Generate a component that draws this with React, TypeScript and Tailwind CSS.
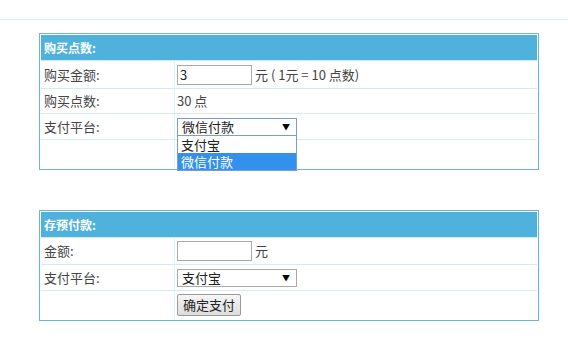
const font = { fontFamily: '"Noto Sans CJK SC", "Liberation Sans", sans-serif' };

function Select({ value, open }: { value: string; open?: boolean }) {
  return (
    <div className="relative">
      <div
        className={`flex h-[18px] w-[120px] items-center justify-between border bg-white pl-[4px] pr-[6px] text-[13px] leading-none text-[#222] ${
          open ? "border-[#7a9cd3]" : "border-[#a9a9a9]"
        }`}
      >
        <span>{value}</span>
        <span className="text-[8px] text-black">▼</span>
      </div>
      {open && (
        <div className="absolute left-0 top-[18px] z-10 w-[120px] border border-[#7a9cd3] border-t-0 bg-white text-[13px] leading-[17px] text-[#222]">
          <div className="px-[3px]">支付宝</div>
          <div className="bg-[#3390ec] px-[3px] text-white">微信付款</div>
        </div>
      )}
    </div>
  );
}

function Row({ label, h, children }: { label?: string; h: string; children?: React.ReactNode }) {
  return (
    <div className={`grid grid-cols-[134px_1fr] border-t border-[#d4ebf5] ${h}`}>
      <div className="flex items-center border-r border-[#e3f1f8] pl-[3px]">{label}</div>
      <div className="flex items-center gap-[3px] pl-[2px]">{children}</div>
    </div>
  );
}

function Panel({ title, children }: { title: string; children: React.ReactNode }) {
  return (
    <div className="w-[500px] border border-[#67b9d8] p-px">
      <div className="flex h-[25px] items-center bg-[#4fb2dd] pl-[3px] text-[12px] font-bold text-white">
        {title}
      </div>
      {children}
    </div>
  );
}

export default function App() {
  return (
    <div className="h-[350px] w-[568px] bg-white text-[13px] text-[#444]" style={font}>
      <div className="h-[20px] border-b border-[#d9eff3]" />
      <div className="flex flex-col gap-[40px] pl-[39px] pt-[13px]">
        <Panel title="购买点数:">
          <Row label="购买金额:" h="h-[28px]">
            <div className="h-[20px] w-[75px] border border-[#a9a9a9] pl-[2px] text-[13px] leading-[18px] text-[#222]">3</div>
            <span>元 ( 1元 = 10 点数)</span>
          </Row>
          <Row label="购买点数:" h="h-[25px]">
            <span>30 点</span>
          </Row>
          <Row label="支付平台:" h="h-[26px]">
            <Select value="微信付款" open />
          </Row>
          <Row h="h-[29px]" />
        </Panel>
        <Panel title="存预付款:">
          <Row label="金额:" h="h-[27px]">
            <div className="h-[20px] w-[75px] border border-[#a9a9a9]" />
            <span>元</span>
          </Row>
          <Row label="支付平台:" h="h-[26px]">
            <Select value="支付宝" />
          </Row>
          <Row h="h-[29px]">
            <button className="h-[22px] w-[64px] rounded-[2px] border border-[#9a9a9a] bg-gradient-to-b from-[#f6f6f6] to-[#dddddd] text-[13px] text-[#222]">
              确定支付
            </button>
          </Row>
        </Panel>
      </div>
    </div>
  );
}
